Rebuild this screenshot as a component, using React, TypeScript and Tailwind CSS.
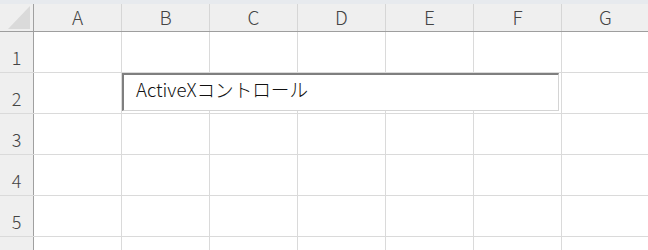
import React from "react";

const cols = ["A", "B", "C", "D", "E", "F", "G"];
const rows = ["1", "2", "3", "4", "5", ""];

export default function App() {
  return (
    <div
      className="relative w-[648px] h-[250px] overflow-hidden bg-white"
      style={{ fontFamily: '"Noto Sans CJK JP", "Noto Sans", sans-serif' }}
    >
      <div className="h-[4px] bg-[#e7eaee]" />
      {/* column header */}
      <div className="flex h-[28px] bg-[#efefef] border-b border-[#9e9e9e]">
        <div className="relative w-[34px] shrink-0 border-r border-[#a0a0a0]">
          <svg className="absolute left-0 top-0" width="33" height="27" viewBox="0 0 33 27">
            <polygon points="30,2 30,25 8,25" fill="#dadada" />
          </svg>
        </div>
        {cols.map((c) => (
          <div
            key={c}
            className="w-[88px] shrink-0 border-r border-[#d6d6d6] flex items-center justify-center text-[19px] font-light text-[#444] leading-none pb-[2px]"
          >
            {c}
          </div>
        ))}
      </div>
      {/* rows */}
      {rows.map((r, i) => (
        <div key={i} className="flex h-[41px] border-b border-[#dadada]">
          <div className="w-[34px] shrink-0 bg-[#efefef] border-r border-[#a0a0a0] flex items-center justify-center text-[18px] font-light text-[#444] leading-none pt-[10px]">
            {r}
          </div>
          {cols.map((c) => (
            <div key={c} className="w-[88px] shrink-0 border-r border-[#dadada]" />
          ))}
        </div>
      ))}
      {/* ActiveX text box control */}
      <div className="absolute left-[122px] top-[73px] w-[437px] h-[38px] bg-white border-t-2 border-l-2 border-t-[#7f7f7f] border-l-[#7f7f7f] border-r border-b border-r-[#d4d4d4] border-b-[#d4d4d4] pl-[12px] pt-[3px] text-[18.6px] font-light leading-[22px] text-[#111]">
        ActiveXコントロール
      </div>
    </div>
  );
}
